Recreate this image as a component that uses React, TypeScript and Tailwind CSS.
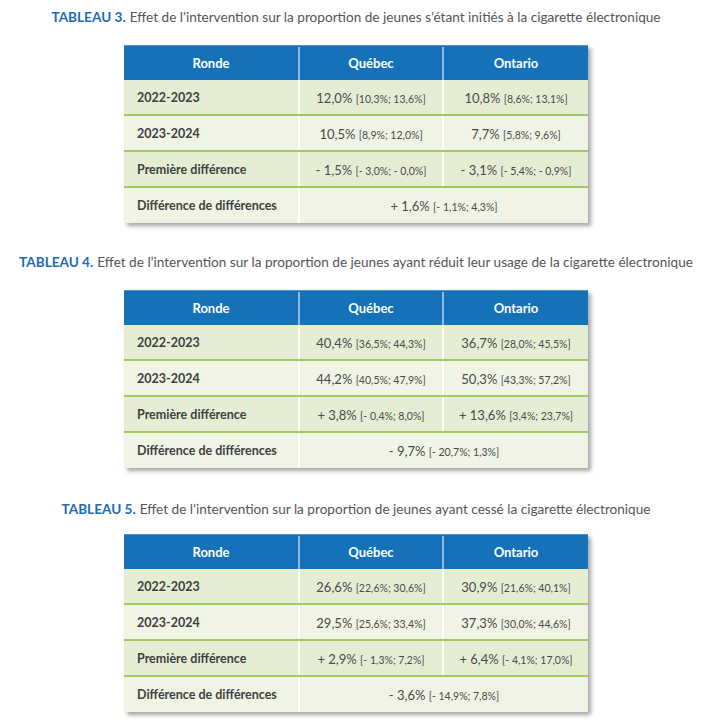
import React from "react";

type Val = { v: string; ci: string };
type Table = {
  num: string;
  title: string;
  rows: { label: string; qc: Val; on: Val }[];
  dd: Val;
};

const tables: Table[] = [
  {
    num: "TABLEAU 3.",
    title: "Effet de l’intervention sur la proportion de jeunes s’étant initiés à la cigarette électronique",
    rows: [
      { label: "2022-2023", qc: { v: "12,0%", ci: "[10,3%; 13,6%]" }, on: { v: "10,8%", ci: "[8,6%; 13,1%]" } },
      { label: "2023-2024", qc: { v: "10,5%", ci: "[8,9%; 12,0%]" }, on: { v: "7,7%", ci: "[5,8%; 9,6%]" } },
      { label: "Première différence", qc: { v: "- 1,5%", ci: "[- 3,0%; - 0,0%]" }, on: { v: "- 3,1%", ci: "[- 5,4%; - 0,9%]" } },
    ],
    dd: { v: "+ 1,6%", ci: "[- 1,1%; 4,3%]" },
  },
  {
    num: "TABLEAU 4.",
    title: "Effet de l’intervention sur la proportion de jeunes ayant réduit leur usage de la cigarette électronique",
    rows: [
      { label: "2022-2023", qc: { v: "40,4%", ci: "[36,5%; 44,3%]" }, on: { v: "36,7%", ci: "[28,0%; 45,5%]" } },
      { label: "2023-2024", qc: { v: "44,2%", ci: "[40,5%; 47,9%]" }, on: { v: "50,3%", ci: "[43,3%; 57,2%]" } },
      { label: "Première différence", qc: { v: "+ 3,8%", ci: "[- 0,4%; 8,0%]" }, on: { v: "+ 13,6%", ci: "[3,4%; 23,7%]" } },
    ],
    dd: { v: "- 9,7%", ci: "[- 20,7%; 1,3%]" },
  },
  {
    num: "TABLEAU 5.",
    title: "Effet de l’intervention sur la proportion de jeunes ayant cessé la cigarette électronique",
    rows: [
      { label: "2022-2023", qc: { v: "26,6%", ci: "[22,6%; 30,6%]" }, on: { v: "30,9%", ci: "[21,6%; 40,1%]" } },
      { label: "2023-2024", qc: { v: "29,5%", ci: "[25,6%; 33,4%]" }, on: { v: "37,3%", ci: "[30,0%; 44,6%]" } },
      { label: "Première différence", qc: { v: "+ 2,9%", ci: "[- 1,3%; 7,2%]" }, on: { v: "+ 6,4%", ci: "[- 4,1%; 17,0%]" } },
    ],
    dd: { v: "- 3,6%", ci: "[- 14,9%; 7,8%]" },
  },
];

function Value({ v }: { v: Val }) {
  return (
    <span className="text-[13px] text-[#4a4a4a]">
      {v.v} <span className="text-[10.5px]">{v.ci}</span>
    </span>
  );
}

function DataTable({ t }: { t: Table }) {
  return (
    <div className="w-[464px] ml-[124px] shadow-[3px_3px_4px_rgba(0,0,0,0.35)]">
      <div className="grid grid-cols-[176px_144px_144px] h-[35px] pt-[1px] bg-[#1571b8] border-t border-[#4d93cc] text-white text-[13px] font-bold">
        <div className="flex items-center justify-center border-r-2 border-[#8dbbe3]">Ronde</div>
        <div className="flex items-center justify-center border-r-2 border-[#8dbbe3]">Québec</div>
        <div className="flex items-center justify-center">Ontario</div>
      </div>
      {t.rows.map((r, i) => (
        <div
          key={r.label}
          className={
            "grid grid-cols-[176px_144px_144px] h-[36px] border-b-2 border-[#a3c85e] " +
            (i % 2 === 0 ? "bg-[#e5eed4]" : "bg-[#eff4e5]")
          }
        >
          <div className="flex items-center pl-[13px] pt-[3px] border-r-2 border-white text-[12.5px] font-bold text-[#404040]">
            {r.label}
          </div>
          <div className="flex items-center justify-center pt-[3px] border-r-2 border-white">
            <Value v={r.qc} />
          </div>
          <div className="flex items-center justify-center pt-[3px]">
            <Value v={r.on} />
          </div>
        </div>
      ))}
      <div className="grid grid-cols-[176px_288px] h-[35px] bg-[#eff4e5]">
        <div className="flex items-center pl-[13px] pt-[2px] border-r-2 border-white text-[12.5px] font-bold text-[#404040]">
          Différence de différences
        </div>
        <div className="flex items-center justify-center pt-[2px]">
          <Value v={t.dd} />
        </div>
      </div>
    </div>
  );
}

function Title({ t }: { t: Table }) {
  return (
    <div className="w-[712px] h-5 flex items-center justify-center text-[13.6px] text-[#555] whitespace-nowrap">
      <span className="font-bold text-[#1c6db4] mr-[4px]">{t.num}</span>
      {t.title}
    </div>
  );
}

export default function App() {
  return (
    <div className="w-[721px] h-[724px] bg-white pt-[7px] font-['Lato',sans-serif]">
      <Title t={tables[0]} />
      <div className="mt-[18px]">
        <DataTable t={tables[0]} />
      </div>
      <div className="mt-[29px]">
        <Title t={tables[1]} />
      </div>
      <div className="mt-[18px]">
        <DataTable t={tables[1]} />
      </div>
      <div className="mt-[31px]">
        <Title t={tables[2]} />
      </div>
      <div className="mt-[15px]">
        <DataTable t={tables[2]} />
      </div>
    </div>
  );
}
